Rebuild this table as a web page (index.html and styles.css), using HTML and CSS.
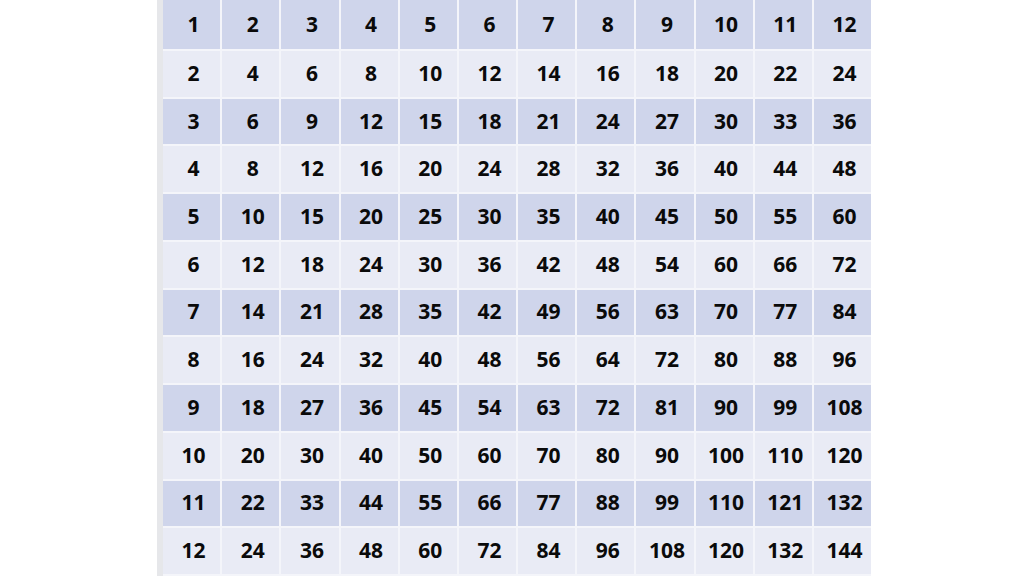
FILE: index.html
```html
<!DOCTYPE html>
<html>
<head>
<meta charset="utf-8">
<link rel="stylesheet" href="styles.css">
</head>
<body>
<div class="page">
  <div class="edge"></div>
  <div class="table" id="table"></div>
</div>
<script>
  var t = document.getElementById('table');
  for (var r = 1; r <= 12; r++) {
    for (var c = 1; c <= 12; c++) {
      var d = document.createElement('div');
      d.className = 'cell ' + (r % 2 ? 'dark' : 'light');
      d.textContent = r * c;
      t.appendChild(d);
    }
  }
</script>
</body>
</html>
```
FILE: styles.css
```css
html, body {
  margin: 0;
  padding: 0;
  background: #ffffff;
}
.page {
  display: flex;
  width: 1024px;
  height: 576px;
  padding-left: 157px;
  box-sizing: border-box;
  overflow: hidden;
}
.edge {
  width: 6px;
  height: 576px;
  background: #e6e7ea;
}
.table {
  width: 708px;
  height: 576px;
  padding-bottom: 2px;
  box-sizing: border-box;
  display: grid;
  grid-template-columns: repeat(12, 1fr);
  grid-template-rows: 49px repeat(11, 1fr);
  gap: 2px;
  background: #f4f5fa;
}
.cell {
  display: flex;
  align-items: center;
  justify-content: center;
  padding: 0 0 2px 4px;
  font-family: "Open Sans", "Liberation Sans", sans-serif;
  font-weight: 700;
  font-size: 21px;
  color: #0a0a0a;
}
.dark {
  background: #cfd5eb;
}
.light {
  background: #e9ebf5;
}
```
